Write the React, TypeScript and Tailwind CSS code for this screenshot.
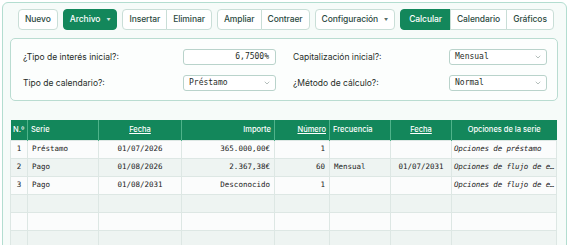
import { ChevronDown } from "lucide-react";

const sans = { fontFamily: "Inter, 'Noto Sans', sans-serif" };
const mono = { fontFamily: "'DejaVu Sans Mono', 'Liberation Mono', monospace" };

function Btn({ label, active, caret, cls = "" }: { label: string; active?: boolean; caret?: boolean; cls?: string }) {
  return (
    <button
      className={
        "h-[21px] px-[6px] flex items-center gap-[6px] text-[8.5px] tracking-[-0.01em] font-medium " +
        (active ? "bg-[#13875b] text-white border border-[#13875b] " : "bg-white text-[#2c4a3f] border border-[#c9ded7] ") +
        cls
      }
    >
      {label}
      {caret && <span className="text-[4px] leading-none opacity-80">▼</span>}
    </button>
  );
}

function Select({ value, w }: { value: string; w: string }) {
  return (
    <div className={"h-[16px] border border-[#b9d3cb] rounded-[3px] bg-white flex items-center justify-between pl-[5px] pr-[4px] " + w}>
      <span className="text-[8px] text-[#1f2d28]" style={mono}>{value}</span>
      <ChevronDown size={8} strokeWidth={1.5} className="text-[#6b7f78]" />
    </div>
  );
}

const rows = [
  ["1", "Préstamo", "01/07/2026", "365.000,00€", "1", "", "", "Opciones de préstamo"],
  ["2", "Pago", "01/08/2026", "2.367,38€", "60", "Mensual", "01/07/2031", "Opciones de flujo de e…"],
  ["3", "Pago", "01/08/2031", "Desconocido", "1", "", "", "Opciones de flujo de e…"],
  ["", "", "", "", "", "", "", ""],
  ["", "", "", "", "", "", "", ""],
  ["", "", "", "", "", "", "", ""],
];

const align = ["text-center", "text-left", "text-center", "text-right", "text-right", "text-left", "text-center", "text-left"];

export default function App() {
  return (
    <div className="w-[570px] h-[245px] overflow-hidden bg-white" style={sans}>
      <div className="ml-[2px] mt-[2px] w-[565px] h-[260px] border border-[#b3ddd0] rounded-[6px] bg-[#f6fbf9] px-[7px] pt-[6px]">
        <div className="flex items-center gap-[5px] pl-[8px]">
          <Btn label="Nuevo" cls="rounded-[4px] text-[#1d5a45]" />
          <Btn label="Archivo" active caret cls="rounded-[4px]" />
          <div className="flex">
            <Btn label="Insertar" cls="rounded-l-[4px]" />
            <Btn label="Eliminar" cls="rounded-r-[4px] -ml-px" />
          </div>
          <div className="flex">
            <Btn label="Ampliar" cls="rounded-l-[4px]" />
            <Btn label="Contraer" cls="rounded-r-[4px] -ml-px" />
          </div>
          <Btn label="Configuración" caret cls="rounded-[4px]" />
          <div className="flex">
            <Btn label="Calcular" active cls="rounded-l-[4px] px-[8px]" />
            <Btn label="Calendario" cls="-ml-px" />
            <Btn label="Gráficos" cls="rounded-r-[4px] -ml-px" />
          </div>
        </div>

        <div className="mt-[8px] w-[548px] h-[63px] border border-[#b9dcd1] rounded-[5px] bg-[#fcfefd] pl-[12px] pt-[10px] flex flex-col gap-[10px] text-[8.5px] text-[#1f2d28]">
          <div className="flex items-center">
            <span className="w-[160px]">¿Tipo de interés inicial?:</span>
            <div className="w-[93px] h-[16px] border border-[#b9d3cb] rounded-[3px] bg-white flex items-center justify-end pr-[6px]">
              <span className="text-[8px]" style={mono}>6,7500%</span>
            </div>
            <span className="w-[156px] ml-[17px]">Capitalización inicial?:</span>
            <Select value="Mensual" w="w-[98px]" />
          </div>
          <div className="flex items-center">
            <span className="w-[160px]">Tipo de calendario?:</span>
            <Select value="Préstamo" w="w-[93px]" />
            <span className="w-[156px] ml-[17px]">¿Método de cálculo?:</span>
            <Select value="Normal" w="w-[98px]" />
          </div>
        </div>

        <table className="mt-[19px] w-[546px] table-fixed border-collapse">
          <colgroup>
            <col className="w-[17px]" />
            <col className="w-[71px]" />
            <col className="w-[83px]" />
            <col className="w-[93px]" />
            <col className="w-[55px]" />
            <col className="w-[61px]" />
            <col className="w-[61px]" />
            <col className="w-[105px]" />
          </colgroup>
          <thead>
            <tr className="h-[20px] bg-[#13875b] text-white text-[7.5px]">
              <th className="px-[2px] text-center font-medium border-r border-[#4fb38a]">N.º</th>
              <th className="px-[3px] text-left font-medium border-r border-[#4fb38a]">Serie</th>
              <th className="px-[3px] text-center font-medium underline border-r border-[#4fb38a]">Fecha</th>
              <th className="px-[3px] text-right font-medium border-r border-[#4fb38a]">Importe</th>
              <th className="px-[3px] text-right font-medium underline border-r border-[#4fb38a]">Número</th>
              <th className="px-[3px] text-left font-medium border-r border-[#4fb38a]">Frecuencia</th>
              <th className="px-[3px] text-center font-medium underline border-r border-[#4fb38a]">Fecha</th>
              <th className="px-[3px] text-center font-medium">Opciones de la serie</th>
            </tr>
          </thead>
          <tbody>
            {rows.map((r, i) => (
              <tr key={i} className={"h-[18px] " + (i % 2 === 0 ? "bg-[#fbfcfc]" : "bg-[#eef4f2]")}>
                {r.map((c, j) => (
                  <td
                    key={j}
                    className={
                      (j === 7 ? "pl-[2px] pr-0 italic tracking-[-0.02em] " : "px-[4px] ") +
                      "text-[7.5px] text-[#222] whitespace-nowrap overflow-hidden border border-[#dde7e4] " +
                      align[j]
                    }
                    style={mono}
                  >
                    {c}
                  </td>
                ))}
              </tr>
            ))}
          </tbody>
        </table>
      </div>
    </div>
  );
}
